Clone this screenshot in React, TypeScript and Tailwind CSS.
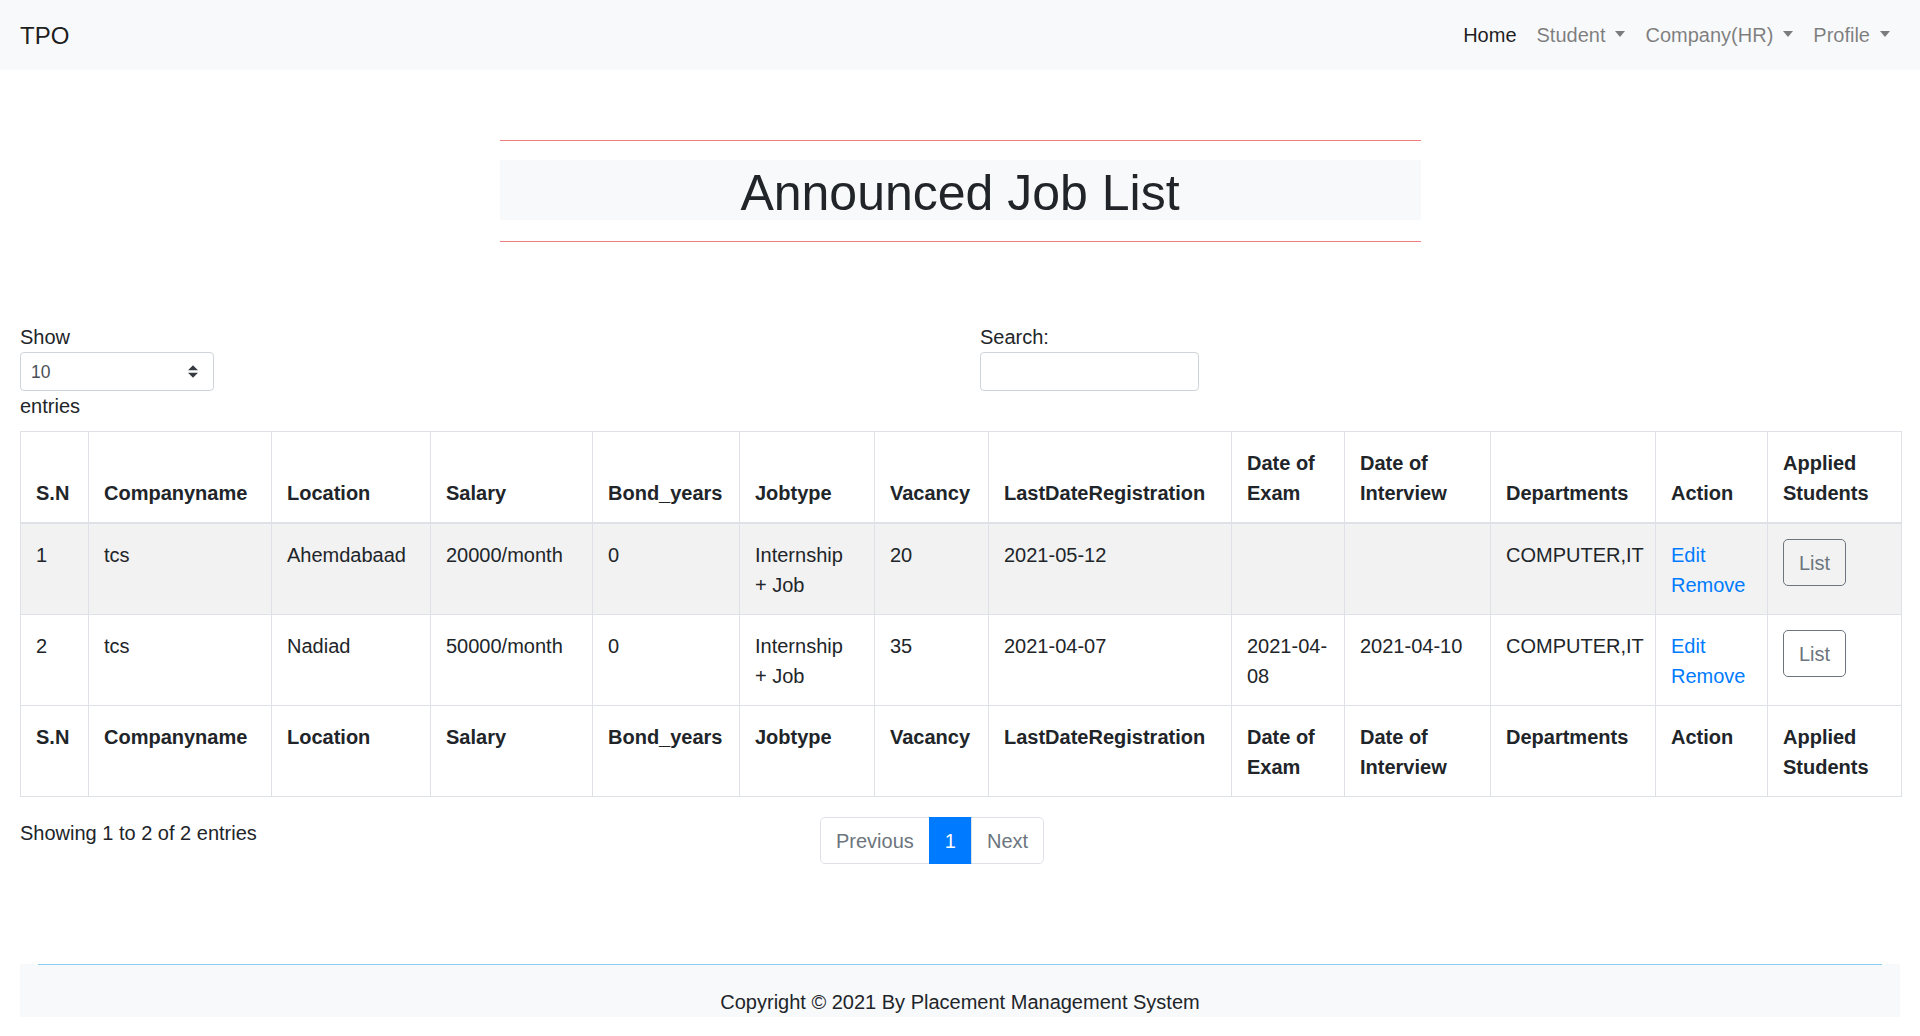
import React from 'react';

interface Job {
  sn: number;
  company: string;
  location: string;
  salary: string;
  bond: string;
  jobtype: string;
  vacancy: string;
  lastDate: string;
  examDate: string;
  interviewDate: string;
  departments: string;
}

const jobs: Job[] = [
  {
    sn: 1,
    company: 'tcs',
    location: 'Ahemdabaad',
    salary: '20000/month',
    bond: '0',
    jobtype: 'Internship + Job',
    vacancy: '20',
    lastDate: '2021-05-12',
    examDate: '',
    interviewDate: '',
    departments: 'COMPUTER,IT',
  },
  {
    sn: 2,
    company: 'tcs',
    location: 'Nadiad',
    salary: '50000/month',
    bond: '0',
    jobtype: 'Internship + Job',
    vacancy: '35',
    lastDate: '2021-04-07',
    examDate: '2021-04-08',
    interviewDate: '2021-04-10',
    departments: 'COMPUTER,IT',
  },
];

const headers = [
  'S.N',
  'Companyname',
  'Location',
  'Salary',
  'Bond_years',
  'Jobtype',
  'Vacancy',
  'LastDateRegistration',
  'Date of Exam',
  'Date of Interview',
  'Departments',
  'Action',
  'Applied Students',
];

const colWidths = [68, 183, 159, 162, 147, 135, 114, 243, 113, 146, 165, 112, 134];

const Caret = () => (
  <span className="inline-block w-0 h-0 ml-[10px] align-[5px] border-t-[6px] border-t-current border-x-[5px] border-x-transparent" />
);

const NavBar = () => (
  <nav className="h-[70px] bg-[#f8f9fa] flex items-center px-[20px]">
    <a href="#" className="text-[24px] leading-[37px] text-black/90">
      TPO
    </a>
    <ul className="ml-auto flex items-center">
      <li>
        <a href="#" className="block px-[10px] text-black/90">
          Home
        </a>
      </li>
      <li>
        <a href="#" className="block px-[10px] text-black/50">
          Student
          <Caret />
        </a>
      </li>
      <li>
        <a href="#" className="block px-[10px] text-black/50">
          Company(HR)
          <Caret />
        </a>
      </li>
      <li>
        <a href="#" className="block px-[10px] text-black/50">
          Profile
          <Caret />
        </a>
      </li>
    </ul>
  </nav>
);

export default function App() {
  const cell = 'border border-[#dee2e6] px-[15px] pt-[16px] pb-[14px] text-left align-top';

  return (
    <div className="min-h-screen bg-white text-[#212529] text-[20px] leading-[30px] font-['Liberation_Sans',Arial,sans-serif]">
      <NavBar />

      {/* Title */}
      <div className="w-[921px] mx-auto mt-[70px]">
        <div className="h-px bg-[#f08080]" />
        <h1 className="mt-[19px] h-[60px] bg-[#f8f9fa] text-center text-[50px] leading-[66px] font-medium">
          Announced Job List
        </h1>
        <div className="mt-[21px] h-px bg-[#f08080]" />
      </div>

      {/* Table controls */}
      <div className="flex mt-[80px] px-[20px]">
        <div className="w-[940px]">
          <label className="block">Show</label>
          <div className="relative w-[194px]">
            <select className="appearance-none w-full h-[39px] border border-[#ced4da] rounded-[4px] pl-[10px] text-[17.5px] text-[#495057] bg-white">
              <option>10</option>
              <option>25</option>
              <option>50</option>
              <option>100</option>
            </select>
            <svg
              className="absolute right-[16px] top-[13px] pointer-events-none"
              width="10"
              height="13"
              viewBox="0 0 4 5"
            >
              <path fill="#343a40" d="M2 0L0 2h4zm0 5L0 3h4z" />
            </svg>
          </div>
          <div>entries</div>
        </div>
        <div className="pl-[20px]">
          <label className="block">Search:</label>
          <input
            type="search"
            className="w-[219px] h-[39px] border border-[#ced4da] rounded-[4px] px-[10px] text-[17.5px] outline-none"
          />
        </div>
      </div>

      {/* Table */}
      <div className="px-[20px] mt-[10px]">
        <table className="w-[1880px] table-fixed border-collapse">
          <colgroup>
            {colWidths.map((w, i) => (
              <col key={i} style={{ width: w }} />
            ))}
          </colgroup>
          <thead>
            <tr>
              {headers.map((h) => (
                <th
                  key={h}
                  className="border border-[#dee2e6] border-b-2 px-[15px] pt-[16px] pb-[14px] text-left align-bottom font-bold"
                >
                  {h}
                </th>
              ))}
            </tr>
          </thead>
          <tbody>
            {jobs.map((job, idx) => (
              <tr key={job.sn} className={idx % 2 === 0 ? 'bg-[#f2f2f2]' : ''}>
                <td className={cell}>{job.sn}</td>
                <td className={cell}>{job.company}</td>
                <td className={cell}>{job.location}</td>
                <td className={cell}>{job.salary}</td>
                <td className={cell}>{job.bond}</td>
                <td className={cell}>{job.jobtype}</td>
                <td className={cell}>{job.vacancy}</td>
                <td className={cell}>{job.lastDate}</td>
                <td className={cell}>{job.examDate}</td>
                <td className={cell}>{job.interviewDate}</td>
                <td className={`${cell} whitespace-nowrap`}>{job.departments}</td>
                <td className={cell}>
                  <a href="#" className="block text-[#007bff]">
                    Edit
                  </a>
                  <a href="#" className="block text-[#007bff]">
                    Remove
                  </a>
                </td>
                <td className="border border-[#dee2e6] p-[15px] text-left align-top">
                  <button className="border border-[#6c757d] text-[#6c757d] rounded-[5px] px-[15px] pt-[8px] pb-[7px] leading-[30px]">
                    List
                  </button>
                </td>
              </tr>
            ))}
          </tbody>
          <tfoot>
            <tr>
              {headers.map((h) => (
                <th key={h} className={`${cell} font-bold`}>
                  {h}
                </th>
              ))}
            </tr>
          </tfoot>
        </table>
      </div>

      {/* Info + pagination */}
      <div className="flex mt-[20px] px-[20px]">
        <div className="w-[780px] pt-[1px]">Showing 1 to 2 of 2 entries</div>
        <div className="pl-[20px]">
          <ul className="flex">
            <li>
              <a
                href="#"
                className="block px-[15px] pt-[11px] pb-[9px] leading-[25px] border border-[#dee2e6] rounded-l-[5px] text-[#6c757d]"
              >
                Previous
              </a>
            </li>
            <li>
              <a
                href="#"
                className="block -ml-px px-[15px] pt-[11px] pb-[9px] leading-[25px] border border-[#007bff] bg-[#007bff] text-white"
              >
                1
              </a>
            </li>
            <li>
              <a
                href="#"
                className="block -ml-px px-[15px] pt-[11px] pb-[9px] leading-[25px] border border-[#dee2e6] rounded-r-[5px] text-[#6c757d]"
              >
                Next
              </a>
            </li>
          </ul>
        </div>
      </div>

      {/* Footer */}
      <footer className="mx-[20px] mt-[100px] bg-[#f8f9fa]">
        <div className="mx-[18px] h-px bg-[#87cefa]" />
        <p className="pt-[22px] text-center leading-[30px]">
          Copyright © 2021 By Placement Management System
        </p>
      </footer>
    </div>
  );
}
